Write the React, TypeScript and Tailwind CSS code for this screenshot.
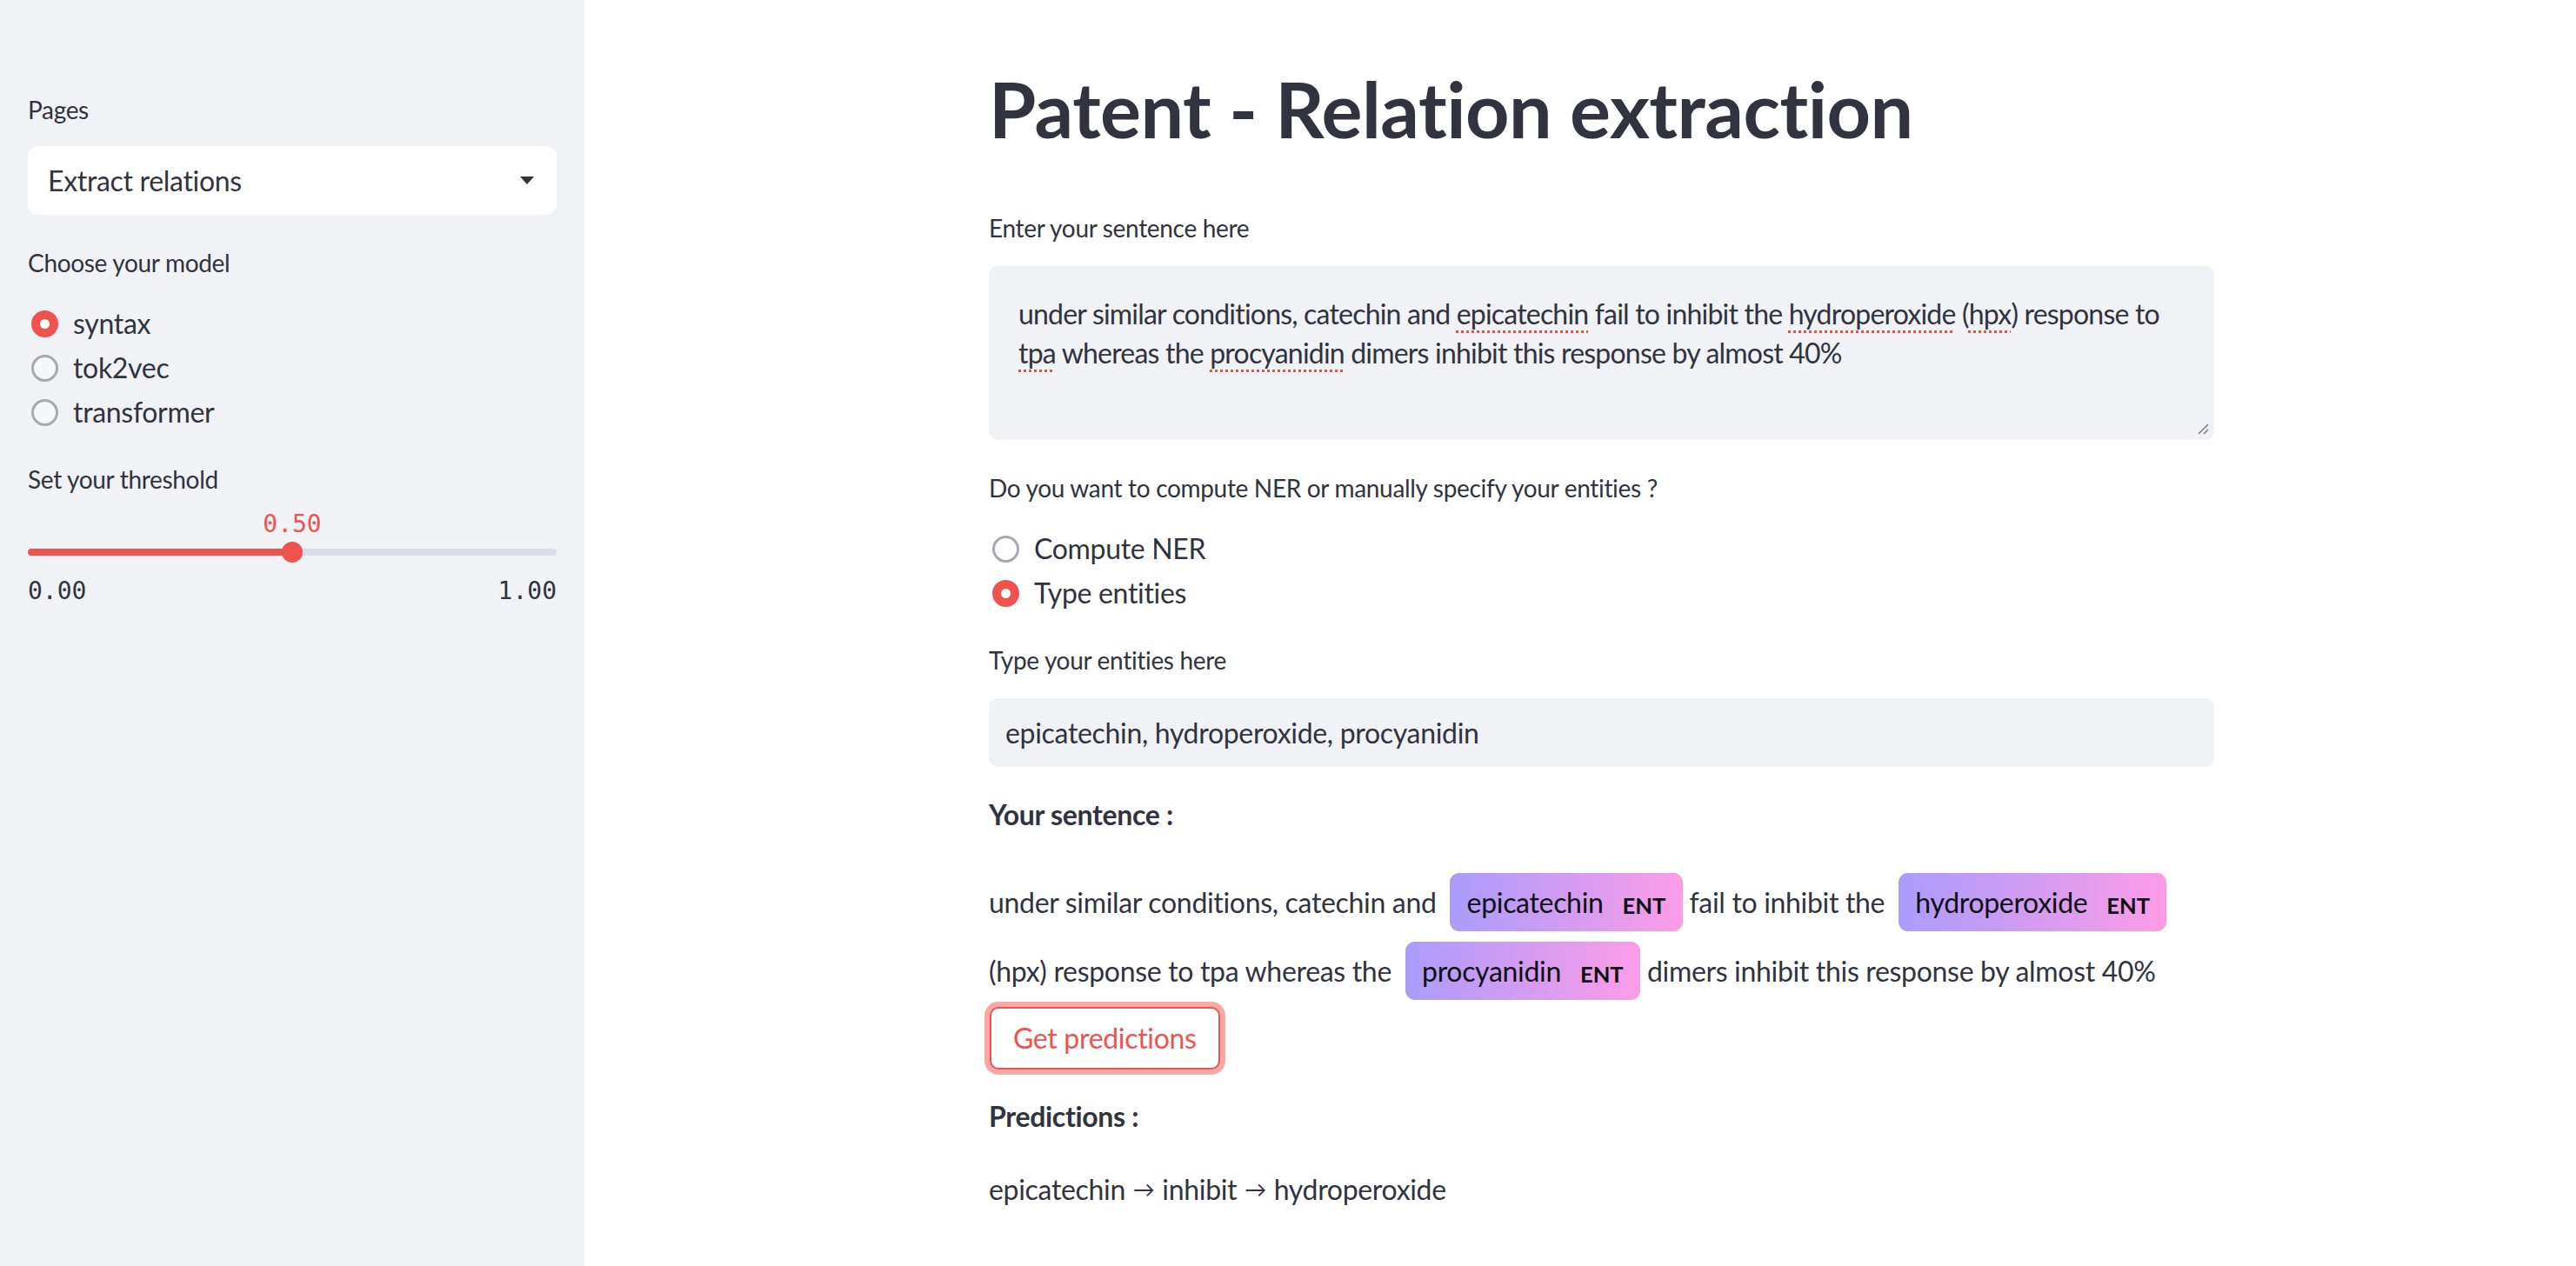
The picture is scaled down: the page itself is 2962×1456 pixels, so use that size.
import React from 'react';

const Radio: React.FC<{ checked?: boolean; label: string }> = ({ checked, label }) => (
  <div className="h-12 flex items-center gap-[17px] pl-1">
    {checked ? (
      <span className="w-[31px] h-[31px] rounded-full bg-[#f0534e] flex items-center justify-center shrink-0">
        <span className="w-[11px] h-[11px] rounded-full bg-white" />
      </span>
    ) : (
      <span className="w-[31px] h-[31px] rounded-full border-[3px] border-[#a6a9b3] bg-white/40 shrink-0" />
    )}
    <span className="text-[32px]">{label}</span>
  </div>
);

const Label: React.FC<{ children: React.ReactNode; className?: string }> = ({ children, className = '' }) => (
  <div className={`h-10 flex items-center text-[28px] ${className}`}>{children}</div>
);

const Ent: React.FC<{ text: string }> = ({ text }) => (
  <mark className="bg-[linear-gradient(90deg,#aa9cfc,#fc9ce7)] text-[#0e0e14] px-[0.6em] py-[0.45em] mx-[0.25em] leading-none rounded-[0.35em]">
    {text}
    <span className="text-[0.8em] font-bold leading-none align-middle ml-[22px] tracking-normal">ENT</span>
  </mark>
);

const Typo: React.FC<{ children: React.ReactNode }> = ({ children }) => (
  <span className="underline decoration-dotted decoration-[#e5534b] decoration-3 underline-offset-[7px]">{children}</span>
);

const Arrow = () => <span className="text-[25px] px-[1px]">→</span>;

export default function App() {
  return (
    <div className="flex w-full h-[1456px] overflow-hidden bg-white text-[#31333f] tracking-[-0.02em] font-['Lato','Noto_Sans',sans-serif]">
      {/* Sidebar */}
      <aside className="w-[672px] shrink-0 bg-[#f0f2f6] px-8 pt-[106px] flex flex-col">
        <Label>Pages</Label>
        <div className="mt-[22px] h-[79px] bg-white rounded-[12px] flex items-center justify-between pl-[23px] pr-[26px] text-[32px]">
          <span>Extract relations</span>
          <svg width="16" height="9" viewBox="0 0 16 9">
            <path d="M0 0 L16 0 L8 9 Z" fill="#31333f" />
          </svg>
        </div>

        <Label className="mt-[35px]">Choose your model</Label>
        <div className="mt-[26px] flex flex-col gap-[3px]">
          <Radio checked label="syntax" />
          <Radio label="tok2vec" />
          <Radio label="transformer" />
        </div>

        <Label className="mt-[33px]">Set your threshold</Label>
        <div className="mt-4 flex flex-col tracking-normal">
          <div className="h-8 flex items-center justify-center text-[28px] text-[#f0534e] font-['DejaVu_Sans_Mono',monospace]">
            0.50
          </div>
          <div className="mt-1 h-6 relative flex items-center">
            <div className="w-full h-2 rounded-full bg-[#dadee8]" />
            <div className="absolute left-0 w-1/2 h-2 rounded-full bg-[#f0534e]" />
            <div className="absolute left-1/2 -translate-x-1/2 w-6 h-6 rounded-full bg-[#f0534e]" />
          </div>
          <div className="mt-[17px] h-8 flex items-center justify-between text-[28px] font-['DejaVu_Sans_Mono',monospace]">
            <span>0.00</span>
            <span>1.00</span>
          </div>
        </div>
      </aside>

      {/* Main */}
      <main className="flex-1 pl-[465px] pt-[72px]">
        <div className="w-[1409px] flex flex-col">
          <h1 className="h-[106px] flex items-center text-[88px] font-bold tracking-[-0.5px]">
            Patent - Relation extraction
          </h1>

          <Label className="mt-[64px]">Enter your sentence here</Label>
          <div className="relative mt-6 h-[200px] bg-[#f0f2f6] rounded-[10px] pl-[34px] pr-4 py-8 text-[32px] leading-[45px] tracking-[-0.025em]">
            <div className="whitespace-nowrap">
              under similar conditions, catechin and <Typo>epicatechin</Typo> fail to inhibit the{' '}
              <Typo>hydroperoxide</Typo> (<Typo>hpx</Typo>) response to
            </div>
            <div className="whitespace-nowrap">
              <Typo>tpa</Typo> whereas the <Typo>procyanidin</Typo> dimers inhibit this response by almost 40%
            </div>
            <svg className="absolute right-[6px] bottom-[6px]" width="14" height="14" viewBox="0 0 14 14">
              <path d="M13 2 L2 13 M13 8 L8 13" stroke="#7a7c85" strokeWidth="1.5" />
            </svg>
          </div>

          <Label className="mt-[35px]">Do you want to compute NER or manually specify your entities ?</Label>
          <div className="mt-[26px] flex flex-col gap-[3px]">
            <Radio label="Compute NER" />
            <Radio checked label="Type entities" />
          </div>

          <Label className="mt-[33px]">Type your entities here</Label>
          <div className="mt-6 h-[79px] bg-[#f0f2f6] rounded-[10px] flex items-center pl-[19px] text-[32px]">
            epicatechin, hydroperoxide, procyanidin
          </div>

          <div className="mt-[31px] h-12 flex items-center text-[32px] font-bold">Your sentence :</div>

          <div className="mt-[37px] text-[32px] leading-[79px]">
            under similar conditions, catechin and <Ent text="epicatechin" />fail to inhibit the{' '}
            <Ent text="hydroperoxide" />
            <br />
            (hpx) response to tpa whereas the <Ent text="procyanidin" />dimers inhibit this response by almost 40%
          </div>

          <div className="mt-[2px] flex">
            <button className="h-[72px] ml-px px-[25px] bg-white border-2 border-[#f0534e] rounded-[10px] shadow-[0_0_0_6px_rgba(240,83,78,0.5)] text-[32px] text-[#f0534e]">
              Get predictions
            </button>
          </div>

          <div className="mt-[30px] h-12 flex items-center text-[32px] font-bold">Predictions :</div>
          <div className="mt-9 h-12 flex items-center text-[32px] whitespace-pre">
            epicatechin <Arrow /> inhibit <Arrow /> hydroperoxide
          </div>
        </div>
      </main>
    </div>
  );
}
